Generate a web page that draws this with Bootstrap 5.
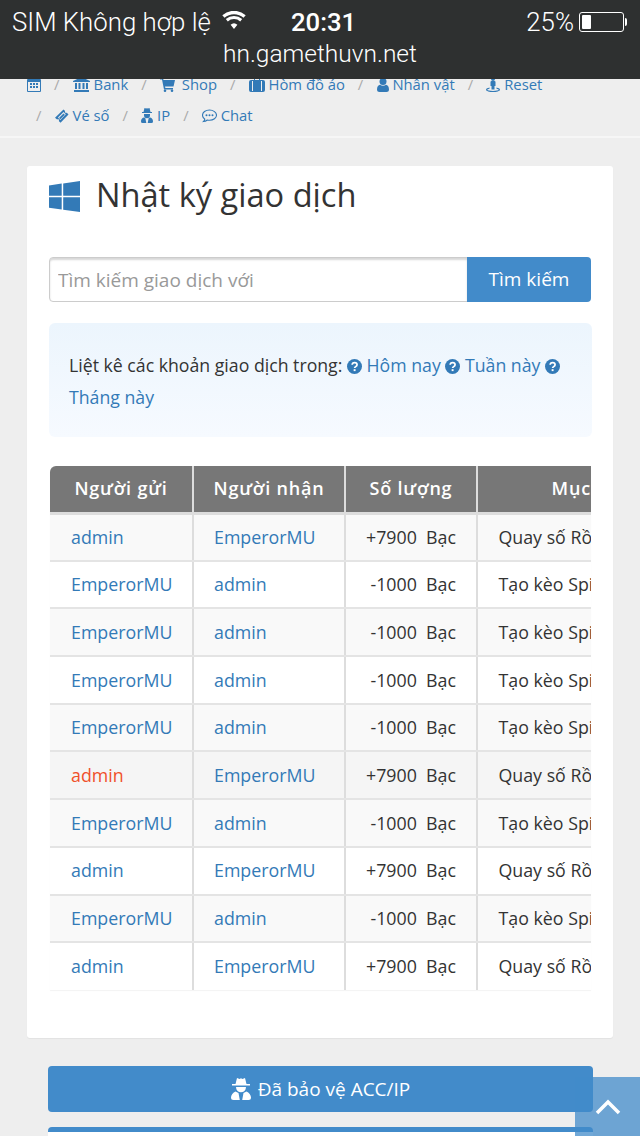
<!DOCTYPE html>
<html lang="vi">
<head>
<meta charset="utf-8">
<title>Nhật ký giao dịch</title>
<link rel="stylesheet" href="https://cdn.jsdelivr.net/npm/bootstrap@5.3.0/dist/css/bootstrap.min.css">
<style>
html,body{height:1136px;overflow:hidden}
body{background:#eee;font-family:"Open Sans","Liberation Sans",sans-serif;font-size:18px;color:#333;position:relative}
a{color:#337ab7;text-decoration:none}
.phone-bar{background:#2e3030;height:79px;color:#fff;font-family:Roboto,"Liberation Sans",sans-serif;position:relative;z-index:2;padding:8px 12px 0 12px;font-weight:300}
.phone-top{height:28px;font-size:25.8px;line-height:28px}
.phone-time{font-weight:500;position:absolute;left:291px;top:8px;font-size:25.7px}
.phone-url{text-align:center;font-size:24.5px;line-height:28px;margin-top:4px}
.wifi-ico{margin-left:11px;margin-top:-5px}
.batt{width:45px;height:20px;border:1px solid #fff;border-radius:3px;margin-left:5px;padding:2px;position:relative}
.batt i{display:block;width:9px;height:14px;background:#fff;border-radius:1px}
.batt::after{content:"";position:absolute;right:-4px;top:5px;width:2px;height:8px;background:#fff;border-radius:0 2px 2px 0}
.crumbs{margin:-10px 0 0;padding:0 70px 5px 27px;font-size:14.8px;line-height:31px;border-bottom:2px solid #f6f6f6;height:69px}
.crumbs .breadcrumb-item{padding-left:9px;margin-right:4px}
.crumbs .breadcrumb-item:first-child{padding-left:0}
.crumbs .breadcrumb-item+.breadcrumb-item::before{color:#aaa;padding-right:13.300px;content:"/"}
.crumbs svg,.fi{fill:#337ab7;vertical-align:-2px}
.crumbs .cart-ico{margin-right:3px}
.sheet{margin:28px 27px 0;height:872px;border:0;border-radius:3px;padding:0 22px;box-shadow:0 1px 1px rgba(0,0,0,.05)}
.sheet-title{font-size:32.6px;font-weight:400;line-height:40px;margin:0;padding-top:0;display:flex;align-items:center;gap:16px;height:91px;padding-bottom:31px;color:#333}
.sheet-title span{margin-bottom:2px}
.search-box{height:45px}
.search-box .form-control{font-size:19px;padding:0 8px;border:1px solid #ccc;box-shadow:inset 0 2px 2px rgba(0,0,0,.16);border-radius:4px 0 0 4px;height:45px}
.search-box .form-control::placeholder{color:#999}
.search-btn{background:#428bca;border:0;color:#fff;font-size:19px;width:124px;border-radius:0 4px 4px 0}
.note{margin:21px -1px 0 0;padding:26px 20px 24px;height:114px;line-height:32px;border:0;border-radius:6px;background:linear-gradient(#ecf5fd,#f6faff);font-size:17.7px;color:#333}
.note svg{vertical-align:-2px}
.grid-wrap{margin:29px 1px 0;overflow:hidden;width:541px;box-shadow:0 1px 1px rgba(0,0,0,.05);border-radius:6px 0 0 0;margin-left:1px}
.ledger{table-layout:fixed;width:1000px;margin:0;font-size:17.8px;border-collapse:collapse}
.ledger th{background:#777;color:#fff;font-weight:600;font-size:18px;letter-spacing:.8px;height:47px;padding:0;text-align:center;border:0;border-right:2px solid #ddd;border-bottom:3px solid #ddd;vertical-align:middle;white-space:nowrap}
.ledger td{height:47.7px;padding:0 0 0 20.500px;border:0;border-right:2px solid #ddd;border-bottom:2px solid #e4e4e4;vertical-align:middle;white-space:nowrap;color:#333;background:#fff;box-shadow:none;overflow:hidden}
.ledger td:first-child{padding-left:21px}
.ledger td:nth-child(2){padding-left:20px}
.ledger td:nth-child(3){padding:0 20px 0 0;text-align:right}
.ledger tr:nth-child(odd) td{background:#f9f9f9}
.ledger tr.row-hot td{background:#f5f5f5}
.ledger tr:last-child td{border-bottom:0}
.ledger .hot{color:#f0512a}
.safe-btn{margin:28px 0 0 48px;height:46px;background:#428bca;color:#fff;font-size:19px;display:flex;align-items:center;justify-content:center;gap:7px;border-radius:4px;border:0;width:545px}
.next-panel{margin:15px 47px 0 48px;height:20px;background:#fff;border-top:5px solid #428bca;border-radius:4px 4px 0 0}
.to-top{position:absolute;right:0;bottom:0;width:65px;height:59px;background:rgba(66,139,202,.75);display:flex;align-items:center;justify-content:center;padding-top:6px;border:0;border-radius:0}
</style>
</head>
<body>
<div class="phone-bar">
  <div class="phone-top d-flex align-items-center">
    <span>SIM Không hợp lệ</span>
    <svg class="wifi-ico" width="24" height="18" viewBox="0 0 24 18"><path d="M12 18l-3.400-4.200a5 5 0 0 1 6.800 0zM5.800 10.400l-2-2.400a12.500 12.500 0 0 1 16.400 0l-2 2.400a9.300 9.300 0 0 0-12.400 0zM2.500 6.800L.3 4.200a17.800 17.800 0 0 1 23.400 0l-2.200 2.600a14.500 14.500 0 0 0-19 0z" fill="#fff"/></svg>
    <span class="phone-time">20:31</span>
    <span class="ms-auto">25%</span>
    <span class="batt me-1"><i></i></span>
  </div>
  <div class="phone-url">hn.gamethuvn.net</div>
</div>

<ol class="breadcrumb crumbs">
  <li class="breadcrumb-item"><a href="#"><svg width="14" height="15" viewBox="0 0 14 15"><path d="M1 2h2V0h2v2h4V0h2v2h2a1 1 0 0 1 1 1v11a1 1 0 0 1-1 1H1a1 1 0 0 1-1-1V3a1 1 0 0 1 1-1zm0 3v9h12V5zm2 1h2v2H3zm3 0h2v2H6zm3 0h2v2H9zm-6 3h2v2H3zm3 0h2v2H6zm3 0h2v2H9z" fill-rule="evenodd"/></svg></a></li>
  <li class="breadcrumb-item"><a href="#"><svg width="17" height="15" viewBox="0 0 17 15"><path d="M8.500 0L17 4v1H0V4zM2 6h2v6H2zm3.500 0h2v6h-2zm4 0h2v6h-2zm3.500 0h2v6h-2zM1 13h15v2H1z"/></svg> Bank</a></li>
  <li class="breadcrumb-item"><a href="#"><svg class="cart-ico" width="15" height="14" viewBox="0 0 15 14"><path d="M0 0h3l.5 2H15l-1.500 6.500H5L5.400 10H13v1.500H4L2 1.500H0z"/><circle cx="5" cy="12.700" r="1.300"/><circle cx="12" cy="12.700" r="1.300"/></svg> Shop</a></li>
  <li class="breadcrumb-item"><a href="#"><svg width="16" height="14" viewBox="0 0 16 14"><path d="M5 2V1a1 1 0 0 1 1-1h4a1 1 0 0 1 1 1v1h3a2 2 0 0 1 2 2v8a2 2 0 0 1-2 2H2a2 2 0 0 1-2-2V4a2 2 0 0 1 2-2zm1 0h4V1H6zM3 3v10h1V3zm9 0v10h1V3z" fill-rule="evenodd"/></svg> Hòm đồ áo</a></li>
  <li class="breadcrumb-item"><a href="#"><svg width="12" height="14" viewBox="0 0 12 14"><circle cx="6" cy="3.500" r="3.500"/><path d="M0 11.500C0 8.500 1.500 7 3 6.800c1.800 1.200 4.200 1.200 6 0 1.500.2 3 1.700 3 4.700 0 1.700-1 2.500-2.500 2.500h-7C1 14 0 13.200 0 11.500z"/></svg> Nhân vật</a></li>
  <li class="breadcrumb-item"><a href="#"><svg width="14" height="15" viewBox="0 0 14 15"><circle cx="7" cy="2" r="2"/><path d="M4.500 5a1 1 0 0 1 1-1h3a1 1 0 0 1 1 1v4h-1v3.500h-3V9h-1z"/><path d="M3.500 10.500C1.500 11 0 11.600 0 12.700 0 14.100 3.500 15 7 15s7-.9 7-2.300c0-1.100-1.500-1.700-3.500-2.200v1.200c1.300.3 2.200.7 2.200 1 0 .5-2.700 1.200-5.700 1.200s-5.700-.7-5.700-1.200c0-.3.9-.7 2.200-1z"/></svg> Reset</a></li>
  <li class="breadcrumb-item"><a href="#"><svg width="14" height="14" viewBox="0 0 14 14"><path d="M8.500.5l1.600 1.600-.3 1 1 1 1-.3 1.700 1.700-8 8.300-1.700-1.700.3-1-1-1-1 .3L0 8.800zM8.500 3L3 8.600l2.300 2.300L10.800 5.300z" fill-rule="evenodd"/><path d="M8.500 4.500l1.300 1.300-4.500 4.500L4 9z"/></svg> Vé số</a></li>
  <li class="breadcrumb-item"><a href="#"><svg width="12" height="15" viewBox="0 0 12 15"><path d="M3.500 0L5 .6 6 .2l1 .4L8.500 0 9.500 4H11V5H1V4h1.500zM3 6h6v1.200a3 3 0 0 1-6 0zM2.800 9.500l1.500.6 1 4.900H1.500A1.500 1.500 0 0 1 0 13.500C0 11.500 1 10 2.800 9.500zm6.400 0C11 10 12 11.500 12 13.500a1.500 1.500 0 0 1-1.500 1.500H6.700l1-4.900z"/></svg> IP</a></li>
  <li class="breadcrumb-item"><a href="#"><svg width="15" height="14" viewBox="0 0 15 14"><path d="M7.500 1C3.600 1 .5 3.300.5 6.200c0 1.500.9 2.900 2.300 3.900-.2.900-.7 1.800-1.300 2.400 1.400-.1 2.800-.7 3.800-1.500.7.100 1.400.2 2.200.2 3.900 0 7-2.300 7-5S11.400 1 7.500 1z" fill="none" stroke="#337ab7" stroke-width="1.100"/><circle cx="4.500" cy="6.200" r="1"/><circle cx="7.500" cy="6.200" r="1"/><circle cx="10.500" cy="6.200" r="1"/></svg> Chat</a></li>
</ol>

<main class="card sheet">
  <h1 class="sheet-title">
    <svg class="fi" width="31" height="31" viewBox="0 0 31 31"><path d="M0 4.400L12.700 2.600V14.800H0zM14.200 2.400L31 0V14.800H14.200zM0 16.300H12.700V28.500L0 26.700zM14.200 16.300H31V31L14.200 28.700z"/></svg>
    <span>Nhật ký giao dịch</span>
  </h1>
  <div class="input-group search-box">
    <input class="form-control" type="text" placeholder="Tìm kiếm giao dịch với">
    <button class="btn search-btn" type="button">Tìm kiếm</button>
  </div>
  <div class="alert note" role="alert">Liệt kê các khoản giao dịch trong:
    <a href="#"><svg width="15" height="15" viewBox="0 0 14 14"><circle cx="7" cy="7" r="7" fill="#337ab7"/><path d="M4.800 5.400C4.900 4 5.900 3.300 7.100 3.300c1.300 0 2.300.8 2.300 2 0 1.800-2.300 1.800-2.300 3.200" fill="none" stroke="#fff" stroke-width="1.600"/><rect x="6.200" y="9.500" width="1.800" height="1.800" fill="#fff"/></svg> Hôm nay</a>
    <a href="#"><svg width="15" height="15" viewBox="0 0 14 14"><circle cx="7" cy="7" r="7" fill="#337ab7"/><path d="M4.800 5.400C4.900 4 5.900 3.300 7.100 3.300c1.300 0 2.300.8 2.300 2 0 1.800-2.300 1.800-2.300 3.200" fill="none" stroke="#fff" stroke-width="1.600"/><rect x="6.200" y="9.500" width="1.800" height="1.800" fill="#fff"/></svg> Tuần này</a>
    <a href="#"><svg width="15" height="15" viewBox="0 0 14 14"><circle cx="7" cy="7" r="7" fill="#337ab7"/><path d="M4.800 5.400C4.900 4 5.900 3.300 7.100 3.300c1.300 0 2.300.8 2.300 2 0 1.800-2.300 1.800-2.300 3.200" fill="none" stroke="#fff" stroke-width="1.600"/><rect x="6.200" y="9.500" width="1.800" height="1.800" fill="#fff"/></svg> Tháng này</a>
  </div>
  <div class="grid-wrap">
    <table class="table ledger">
      <colgroup><col style="width:143px"><col style="width:152px"><col style="width:132px"><col style="width:234px"><col style="width:339px"></colgroup>
      <thead><tr><th>Người gửi</th><th>Người nhận</th><th>Số lượng</th><th>Mục đích</th><th>Thời gian</th></tr></thead>
      <tbody>
        <tr><td><a href="#">admin</a></td><td><a href="#">EmperorMU</a></td><td>+7900&nbsp; Bạc</td><td>Quay số Rồng Hổ</td><td></td></tr>
        <tr><td><a href="#">EmperorMU</a></td><td><a href="#">admin</a></td><td>-1000&nbsp; Bạc</td><td>Tạo kèo Spin</td><td></td></tr>
        <tr><td><a href="#">EmperorMU</a></td><td><a href="#">admin</a></td><td>-1000&nbsp; Bạc</td><td>Tạo kèo Spin</td><td></td></tr>
        <tr><td><a href="#">EmperorMU</a></td><td><a href="#">admin</a></td><td>-1000&nbsp; Bạc</td><td>Tạo kèo Spin</td><td></td></tr>
        <tr><td><a href="#">EmperorMU</a></td><td><a href="#">admin</a></td><td>-1000&nbsp; Bạc</td><td>Tạo kèo Spin</td><td></td></tr>
        <tr class="row-hot"><td><a href="#" class="hot">admin</a></td><td><a href="#">EmperorMU</a></td><td>+7900&nbsp; Bạc</td><td>Quay số Rồng Hổ</td><td></td></tr>
        <tr><td><a href="#">EmperorMU</a></td><td><a href="#">admin</a></td><td>-1000&nbsp; Bạc</td><td>Tạo kèo Spin</td><td></td></tr>
        <tr><td><a href="#">admin</a></td><td><a href="#">EmperorMU</a></td><td>+7900&nbsp; Bạc</td><td>Quay số Rồng Hổ</td><td></td></tr>
        <tr><td><a href="#">EmperorMU</a></td><td><a href="#">admin</a></td><td>-1000&nbsp; Bạc</td><td>Tạo kèo Spin</td><td></td></tr>
        <tr><td><a href="#">admin</a></td><td><a href="#">EmperorMU</a></td><td>+7900&nbsp; Bạc</td><td>Quay số Rồng Hổ</td><td></td></tr>
      </tbody>
    </table>
  </div>
</main>

<a class="btn safe-btn" href="#">
  <svg width="20" height="24" viewBox="0 0 20 24"><path d="M6 1l2.500 1L10 1.300 11.500 2 14 1l1.500 6H19v1.500H1V7h3.500zM5 10h10l-.4 2.200a5 5 0 0 1-9.200 0zM4.500 14.500L7.500 16l1.300 7H2.500A2.500 2.500 0 0 1 0 20.500C0 18 2 15.500 4.500 14.500zm11 0C18 15.500 20 18 20 20.500a2.500 2.500 0 0 1-2.500 2.500h-6.300l1.300-7z" fill="#fff"/></svg>
  <span>Đã bảo vệ ACC/IP</span>
</a>
<div class="next-panel"></div>
<a class="btn to-top" href="#" aria-label="Lên đầu trang"><svg width="26" height="16" viewBox="0 0 26 16"><path d="M2 14L13 3l11 11" fill="none" stroke="#fff" stroke-width="3.500"/></svg></a>
<script src="https://cdn.jsdelivr.net/npm/bootstrap@5.3.0/dist/js/bootstrap.bundle.min.js"></script>
</body>
</html>
